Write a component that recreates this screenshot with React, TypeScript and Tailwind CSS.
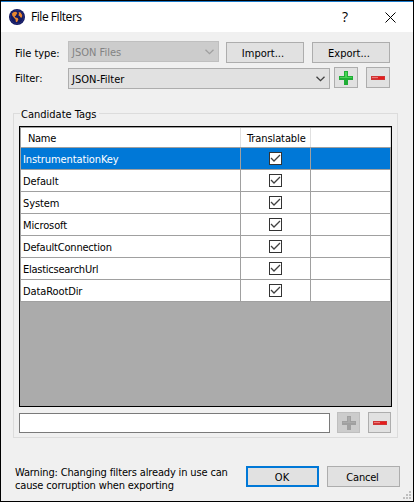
import type { ReactNode } from "react";

const tags = [
  { name: "InstrumentationKey", tracking: "tracking-[-0.1px]" },
  { name: "Default", tracking: "tracking-[-0.1px]" },
  { name: "System", tracking: "tracking-[-0.1px]" },
  { name: "Microsoft", tracking: "tracking-[-0.1px]" },
  { name: "DefaultConnection", tracking: "tracking-[-0.2px]" },
  { name: "ElasticsearchUrl", tracking: "tracking-[-0.25px]" },
  { name: "DataRootDir", tracking: "tracking-[-0.1px]" },
];

function Globe() {
  return (
    <svg width="16" height="16" viewBox="0 0 16 16" className="block">
      <circle cx="8" cy="8" r="8" fill="#14195f" />
      <circle cx="8" cy="8" r="6.6" fill="none" stroke="#2b3488" strokeWidth="0.6" />
      <path d="M3 4.4 4.8 3 7 2.8 8.4 4 7.4 5.4 6.8 6.8 5.6 7.2 6.4 8.4 8.6 9 9.4 10.4 8 13.2 6.8 12.8 6.6 10.4 4.8 8.4 3.2 6.6Z" fill="#e8862f" />
      <path d="M9.6 3 11.6 3.6 13.2 6 13 8.4 11.6 8.6 10.8 7.2 9.4 6.2 10 4.8Z" fill="#e8862f" />
    </svg>
  );
}

function Plus({ disabled = false }: { disabled?: boolean }) {
  return (
    <svg width="14" height="14" viewBox="0 0 14 14" className="block" shapeRendering="crispEdges">
      <path d="M5 0h4v5h5v4H9v5H5V9H0V5h5Z" fill={disabled ? "#a0a0a0" : "#20ad36"} />
      <path d="M6 1h2v5h5v1H6Z" fill={disabled ? "#aaaaaa" : "#45d552"} />
      <path d="M1 6h5v1H1Z" fill={disabled ? "#aaaaaa" : "#55cc60"} />
    </svg>
  );
}

function Minus() {
  return (
    <svg width="14" height="4" viewBox="0 0 14 4" className="block" shapeRendering="crispEdges">
      <path d="M0 0h14v4H0Z" fill="#d03434" />
      <path d="M1 1h6v1H1Z" fill="#ee7777" />
      <path d="M7 1h6v2H7Z" fill="#e51c1c" />
    </svg>
  );
}

function Chevron({ color }: { color: string }) {
  return (
    <svg width="9" height="6" viewBox="0 0 9 6" className="block">
      <path d="m.5.7 4 4 4-4" fill="none" stroke={color} strokeWidth="1.3" />
    </svg>
  );
}

function Check() {
  return (
    <span className="block h-[13px] w-[13px] border border-[#333] bg-white">
      <svg width="11" height="11" viewBox="0 0 11 11" className="block">
        <path d="m1 5 3 3 6-6" fill="none" stroke="#404040" strokeWidth="1.3" />
      </svg>
    </span>
  );
}

function Button({ className, children }: { className: string; children: ReactNode }) {
  return (
    <button className={`flex h-[21px] shrink-0 items-center justify-center ${className}`}>{children}</button>
  );
}

export default function App() {
  return (
    <div className="flex h-[502px] w-[414px] flex-col border border-black bg-[#f0f0f0] font-['DejaVu_Sans_Condensed','DejaVu_Sans',sans-serif] text-[11px] leading-[13px] text-black [font-stretch:condensed]">
      <header className="flex h-[31px] shrink-0 items-center border-t border-[#1979ca] bg-white pl-2 [font-stretch:normal]">
        <Globe />
        <h1 className="ml-[6px] whitespace-nowrap font-['Open_Sans',sans-serif] text-[12px] leading-4 tracking-[-0.45px]">File Filters</h1>
        <span className="ml-auto mr-[37px] font-['Open_Sans',sans-serif] text-[14px] leading-4">?</span>
        <svg width="11" height="11" viewBox="0 0 11 11" className="mr-[17px]">
          <path d="m.5.5 10 10m0-10-10 10" fill="none" stroke="#000" strokeWidth="1" />
        </svg>
      </header>

      <div className="mt-[9px] flex h-[22px] shrink-0 items-start pl-[14px]">
        <span className="mt-[6px] w-[53px] tracking-[-0.05px]">File type:</span>
        <div className="flex h-[21px] w-[151px] items-center justify-between border border-[#bfbfbf] bg-[#ccc] pl-[3px] pr-1 text-[#838383]">
          <span className="mt-[2px]">JSON Files</span>
          <Chevron color="#a0a0a0" />
        </div>
        <Button className="ml-[7px] mt-px w-[78px] border border-[#adadad] bg-[#e1e1e1] pr-[4px] pt-[2px]">Import...</Button>
        <Button className="ml-2 mt-px w-[78px] border border-[#adadad] bg-[#e1e1e1] pr-[4px] pt-[2px]">Export...</Button>
      </div>

      <div className="mt-1 flex h-[22px] shrink-0 items-start pl-[14px]">
        <span className="mt-[5px] w-[53px]">Filter:</span>
        <div className="mt-px flex h-[21px] w-[262px] items-center justify-between border border-[#adadad] bg-[#e1e1e1] pl-[3px] pr-1">
          <span className="mt-[2px]">JSON-Filter</span>
          <Chevron color="#404040" />
        </div>
        <Button className="ml-1 w-[24px] border border-[#adadad] bg-[#e1e1e1]"><Plus /></Button>
        <Button className="ml-2 w-[24px] border border-[#adadad] bg-[#e1e1e1]"><Minus /></Button>
      </div>

      <section className="ml-3 mt-[24px] flex h-[325px] w-[385px] shrink-0 flex-col border border-[#dcdcdc] pl-[5px]">
        <h2 className="-mt-[6px] ml-px h-[13px] w-[79px] whitespace-nowrap bg-[#f0f0f0] pl-px">Candidate Tags</h2>
        <div className="mt-[5px] h-[281px] w-[373px] border border-black bg-[#ababab]">
          <div className="border-l border-t border-[#a0a0a0]">
            <div className="grid h-5 grid-cols-[220px_70px_80px] border-b border-[#a0a0a0] bg-white">
              <span className="border-r border-[#e0e0e0] pl-[7px] pt-1 tracking-[-0.3px]">Name</span>
              <span className="border-r border-[#e0e0e0] pl-[6px] pt-1 tracking-[-0.1px]">Translatable</span>
              <span className="border-r border-[#e0e0e0]" />
            </div>
            {tags.map((tag, i) => (
              <div
                key={tag.name}
                className={`grid h-[22px] grid-cols-[220px_70px_80px] border-b border-[#a0a0a0] ${i === 0 ? "bg-[#0078d7] text-white" : "bg-white"}`}
              >
                <span className={`border-r border-[#a0a0a0] pl-[2px] pt-[5px] ${tag.tracking}`}>{tag.name}</span>
                <span className="border-r border-[#a0a0a0] pl-[28px] pt-1"><Check /></span>
                <span className="border-r border-[#a0a0a0]" />
              </div>
            ))}
          </div>
        </div>
        <div className="mt-[5px] flex">
          <input aria-label="Tag" className="mt-px h-5 w-[311px] border border-[#7a7a7a] bg-white" />
          <Button className="ml-[7px] w-[23px] border border-[#bfbfbf] bg-[#ccc]"><Plus disabled /></Button>
          <Button className="ml-2 w-[23px] border border-[#adadad] bg-[#e1e1e1]"><Minus /></Button>
        </div>
      </section>

      <footer className="relative flex flex-1 items-start pl-[14px] pt-[27px]">
        <p className="mt-px w-[231px] whitespace-nowrap tracking-[-0.15px]">
          Warning: Changing filters already in use can
          <br />
          cause corruption when exporting
        </p>
        <Button className="mt-px w-[73px] border-2 border-[#0078d7] bg-[#e1e1e1] pt-[2px] pr-px">OK</Button>
        <Button className="ml-2 mt-px w-[73px] border border-[#adadad] bg-[#e1e1e1] pt-[2px] pr-[2px] tracking-[-0.2px]">Cancel</Button>
        <svg width="8" height="8" viewBox="0 0 8 8" className="absolute bottom-[2px] right-[2px]" shapeRendering="crispEdges">
          <path d="M6 0h2v2H6ZM3 3h2v2H3ZM6 3h2v2H6ZM0 6h2v2H0ZM3 6h2v2H3ZM6 6h2v2H6Z" fill="#bfbfbf" />
        </svg>
      </footer>
    </div>
  );
}
